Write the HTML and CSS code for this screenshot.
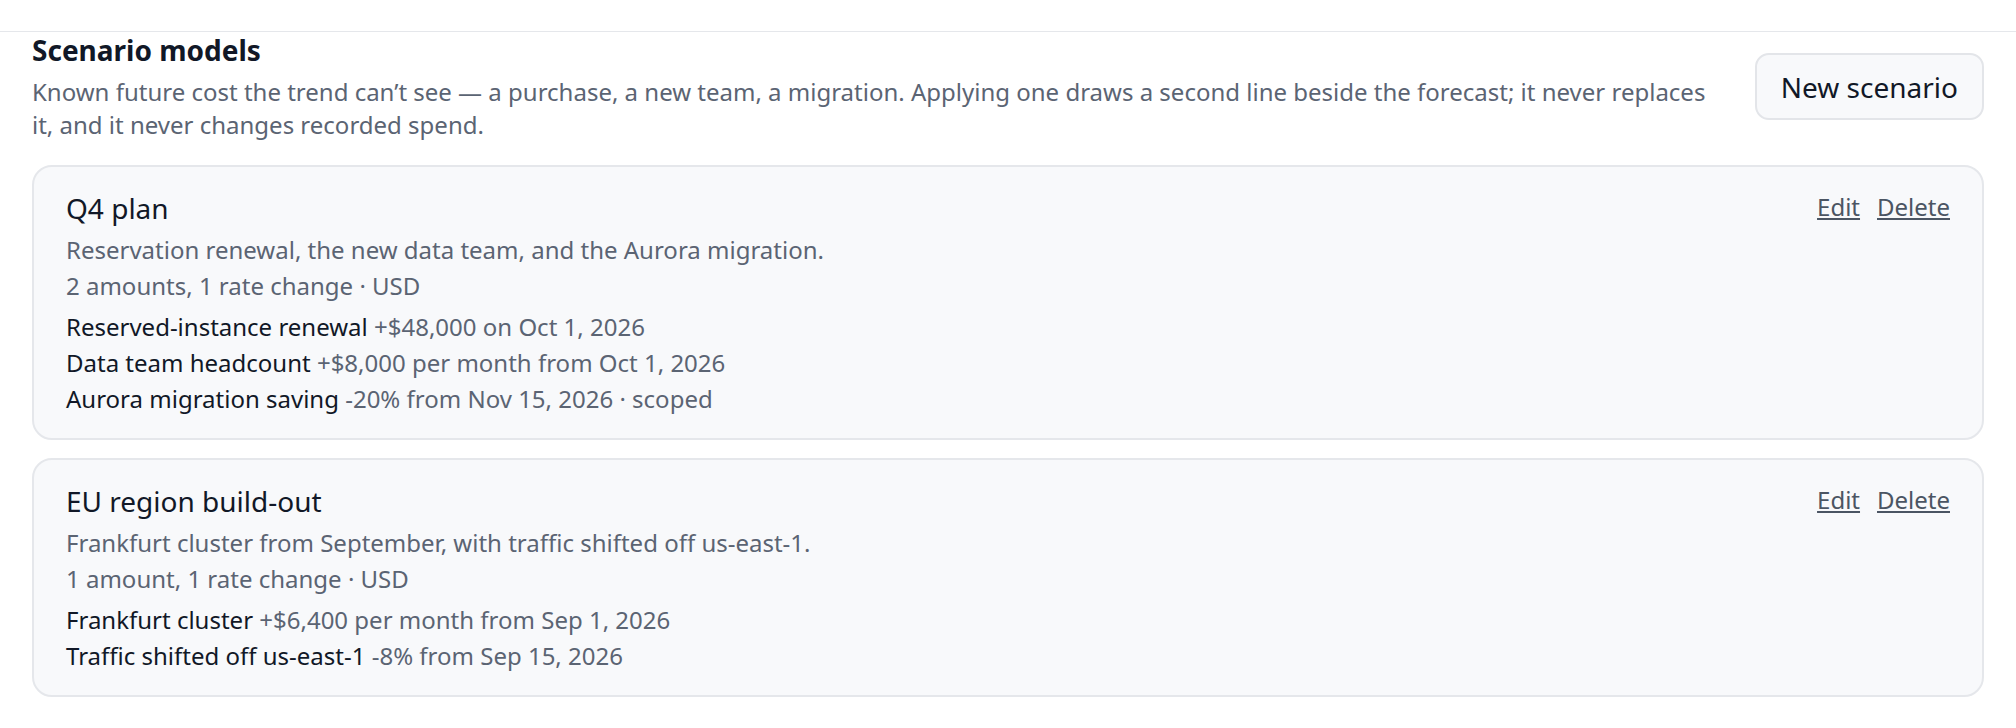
FILE: index.html
```html
<!DOCTYPE html>
<html>
  <head>
    <meta charset="utf-8" />
    <title>Scenario models</title>
    <meta name="viewport" content="width=device-width, initial-scale=1" />
    <link rel="stylesheet" href="styles.css">
  </head>
  <body>
    <section class="scenarios">
      <header class="scenarios-head">
        <div class="scenarios-intro">
          <h2>Scenario models</h2>
          <p>
            Known future cost the trend can’t see — a purchase, a new team, a
            migration. Applying one draws a second line beside the forecast; it
            never replaces it, and it never changes recorded spend.
          </p>
        </div>
        <button class="btn" type="button">New scenario</button>
      </header>

      <article class="scenario">
        <div class="scenario-top">
          <h3>Q4 plan</h3>
          <div class="scenario-actions">
            <a href="#">Edit</a>
            <a href="#">Delete</a>
          </div>
        </div>
        <p class="muted">Reservation renewal, the new data team, and the Aurora migration.</p>
        <p class="muted">2 amounts, 1 rate change · USD</p>
        <ul class="changes">
          <li>Reserved-instance renewal <span>+$48,000 on Oct 1, 2026</span></li>
          <li>Data team headcount <span>+$8,000 per month from Oct 1, 2026</span></li>
          <li>Aurora migration saving <span>-20% from Nov 15, 2026 · scoped</span></li>
        </ul>
      </article>

      <article class="scenario">
        <div class="scenario-top">
          <h3>EU region build-out</h3>
          <div class="scenario-actions">
            <a href="#">Edit</a>
            <a href="#">Delete</a>
          </div>
        </div>
        <p class="muted">Frankfurt cluster from September, with traffic shifted off us-east-1.</p>
        <p class="muted">1 amount, 1 rate change · USD</p>
        <ul class="changes">
          <li>Frankfurt cluster <span>+$6,400 per month from Sep 1, 2026</span></li>
          <li>Traffic shifted off us-east-1 <span>-8% from Sep 15, 2026</span></li>
        </ul>
      </article>
    </section>
  </body>
</html>
```

FILE: styles.css
```css
/* Basics */
body,
html {
  margin: 0;
  padding: 0;
}
body {
  background: #ffffff;
  color: #111827;
  font-family: "Noto Sans", "Open Sans", Arial, sans-serif;
  font-size: 24px;
  line-height: 1.5;
}
* {
  box-sizing: border-box;
}
h2,
h3,
p,
ul {
  margin: 0;
}

/* Section */
.scenarios {
  margin-top: 31px;
  border-top: 1px solid #e5e7eb;
  padding: 0 32px 32px;
}
.scenarios-head {
  display: flex;
  align-items: flex-start;
  gap: 36px;
  margin-bottom: 24px;
}
.scenarios-intro {
  flex: 1 1 auto;
}
.scenarios-intro h2 {
  font-size: 28px;
  font-weight: 700;
  line-height: 36px;
  margin-bottom: 7px;
}
.scenarios-intro p {
  color: #5b6473;
  line-height: 33px;
}

.btn {
  flex: 0 0 auto;
  margin-top: 21px;
  padding: 0 24px;
  height: 67px;
  font: inherit;
  font-size: 28px;
  color: #111827;
  background: #f8f9fb;
  border: 2px solid #e3e5e9;
  border-radius: 14px;
}

/* Scenario cards */
.scenario {
  background: #f8f9fb;
  border: 2px solid #e5e7eb;
  border-radius: 20px;
  padding: 20px 32px 21px;
  margin-bottom: 18px;
}
.scenario-top {
  display: flex;
  justify-content: space-between;
  align-items: center;
  margin-bottom: 3px;
}
.scenario-top h3 {
  font-size: 28px;
  font-weight: 400;
  line-height: 42px;
}
.scenario-actions {
  display: flex;
  gap: 17px;
  margin-top: -2px;
}
.scenario-actions a {
  color: #4b5563;
  text-decoration: underline;
}
.muted {
  color: #5b6473;
  line-height: 36px;
}
.changes {
  list-style: none;
  padding: 0;
  margin-top: 5px;
}
.changes li {
  line-height: 36px;
}
.changes span {
  color: #5b6473;
}
```
